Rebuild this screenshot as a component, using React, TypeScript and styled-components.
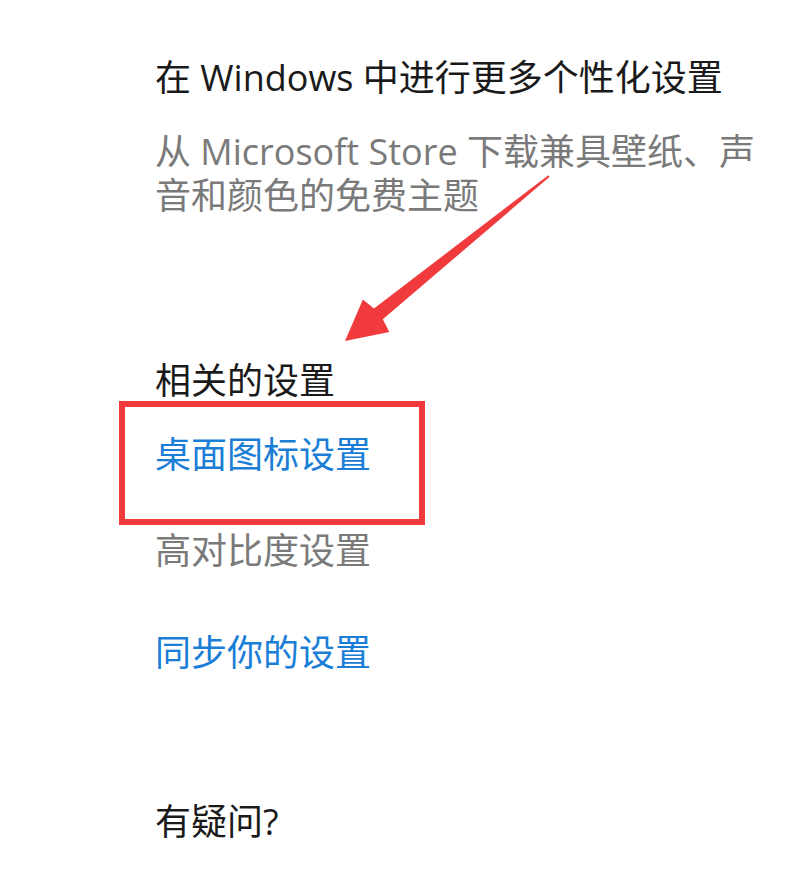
import React from 'react';
import styled, { createGlobalStyle } from 'styled-components';

const GlobalStyle = createGlobalStyle`
    html, body {
        margin: 0;
        padding: 0;
        background: #fff;
    }
    body {
        font-family: 'Open Sans', 'Noto Sans CJK SC', sans-serif;
    }
`;

const Page = styled.div`
    position: relative;
    width: 800px;
    height: 879px;
    overflow: hidden;
    background: #fff;
    box-sizing: border-box;
    padding: 56px 0 0 155px;
    display: flex;
    flex-direction: column;
    align-items: flex-start;
`;

const Line = styled.div<{ $tone?: 'dark' | 'muted' | 'link'; $top?: number }>`
    font-size: 36px;
    line-height: 44px;
    white-space: nowrap;
    margin-top: ${(p) => p.$top ?? 0}px;
    color: ${(p) => (p.$tone === 'muted' ? '#7a7a7a' : p.$tone === 'link' ? '#1a7ed6' : '#1a1a1a')};
`;

const Para = styled.p`
    margin: 30px 0 0;
    width: 612px;
    font-size: 36px;
    line-height: 44px;
    color: #7a7a7a;
`;

const Highlight = styled.div`
    margin: -2px 0 0 -36px;
    width: 306px;
    height: 124px;
    box-sizing: border-box;
    border: 6px solid #f03a3c;
    padding: 26px 0 0 30px;
`;

const Arrow = styled.svg`
    position: absolute;
    left: 340px;
    top: 170px;
    width: 215px;
    height: 180px;
`;

const App: React.FC = () => {
    return (
        <>
            <GlobalStyle />
            <Page>
                <Line>在 Windows 中进行更多个性化设置</Line>
                <Para>从 Microsoft Store 下载兼具壁纸、声音和颜色的免费主题</Para>
                <Line $top={141}>相关的设置</Line>
                <Highlight>
                    <Line $tone="link">桌面图标设置</Line>
                </Highlight>
                <Line $tone="muted" $top={4}>高对比度设置</Line>
                <Line $tone="link" $top={58}>同步你的设置</Line>
                <Line $top={125}>有疑问?</Line>
                <Arrow viewBox="0 0 215 180">
                    <polygon
                        fill="#f03a3c"
                        points="208.4,5.2 34,138.5 22.9,129.5 5,171 49.3,162.1 42.8,149.3 209.6,6.8"
                    />
                </Arrow>
            </Page>
        </>
    );
};

export default App;
